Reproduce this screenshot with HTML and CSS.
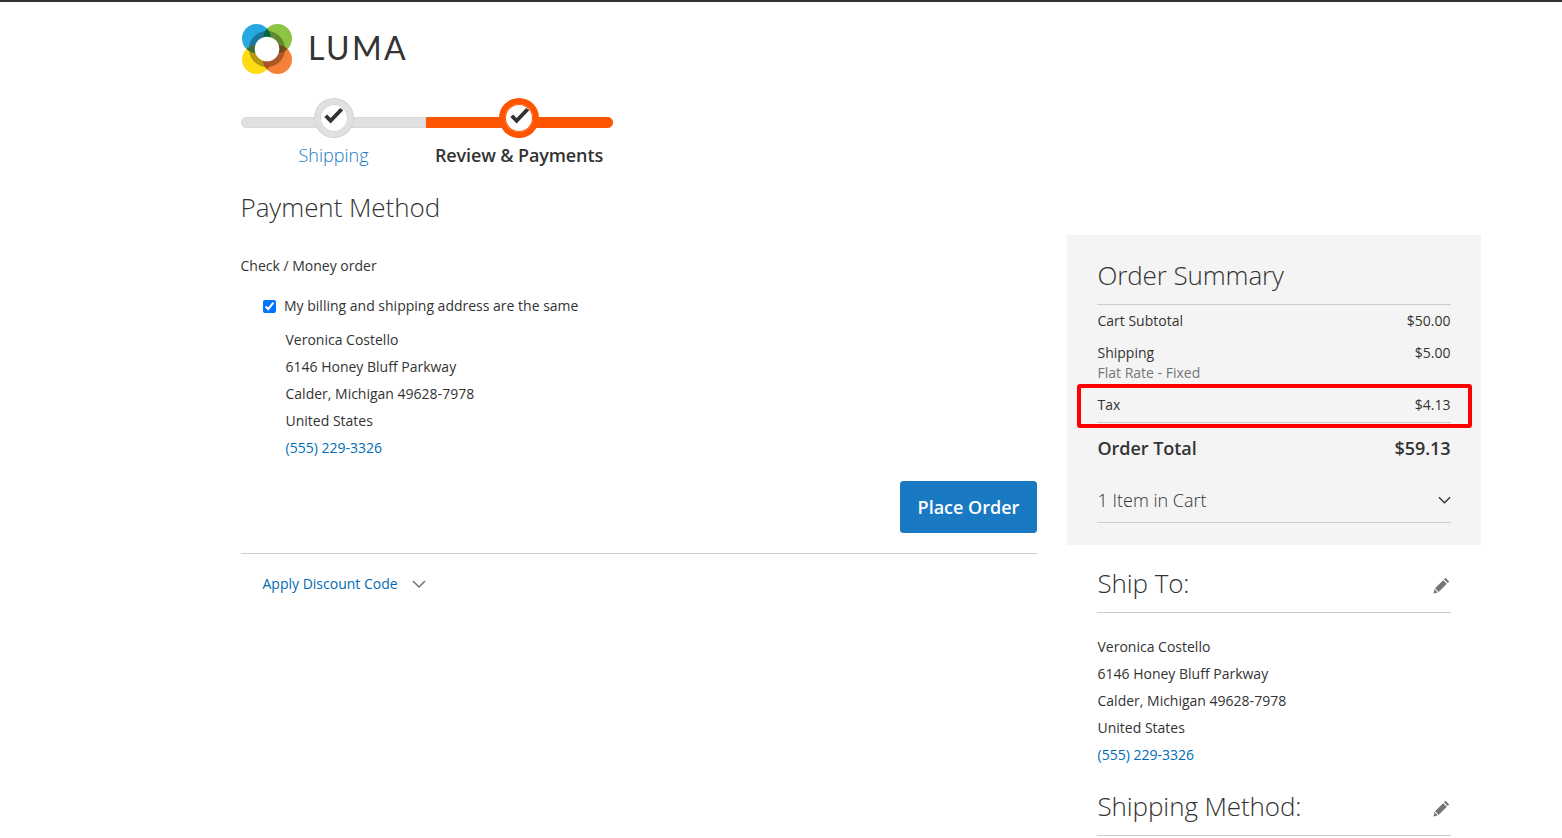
FILE: index.html
```html
<!DOCTYPE html>
<html lang="en">
<head>
<meta charset="utf-8">
<title>Checkout</title>
<link rel="stylesheet" href="styles.css">
</head>
<body>
<div class="page">
  <header class="header">
    <svg class="logo-mark" viewBox="0 0 50 50" width="50" height="50">
      <circle cx="14.500" cy="14.500" r="14.500" fill="#28a8e0"/>
      <circle cx="35.500" cy="14.500" r="14.500" fill="#8cc444"/>
      <circle cx="14.500" cy="35.500" r="14.500" fill="#ffdd15"/>
      <circle cx="35.500" cy="35.500" r="14.500" fill="#f68038"/>
      <circle cx="25" cy="25" r="18" fill="#000" fill-opacity=".3"/>
      <path d="M25 4.500A14.500 14.500 0 0 1 25 24.500A14.500 14.500 0 0 1 25 4.500Z" fill="#006a3e"/>
      <path d="M4.500 25A14.500 14.500 0 0 1 24.500 25A14.500 14.500 0 0 1 4.500 25Z" fill="#3f6b36"/>
      <path d="M25.500 25A14.500 14.500 0 0 1 45.500 25A14.500 14.500 0 0 1 25.500 25Z" fill="#6b4d1c"/>
      <path d="M25 25.500A14.500 14.500 0 0 1 25 45.500A14.500 14.500 0 0 1 25 25.500Z" fill="#a8532a"/>
      <circle cx="25" cy="25" r="12.300" fill="#fff"/>
    </svg>
    <span class="logo-text">LUMA</span>
  </header>

  <ol class="progress">
    <li class="step">
      <span class="badge">
        <svg class="check" viewBox="0 0 20 20" width="23" height="23"><path d="M2 10.500 7.500 16 18.500 4.500 15.800 2.500 7.500 11.200 4.500 8.200Z" fill="#333"/></svg>
      </span>
      <a class="step-label" href="#">Shipping</a>
    </li>
    <li class="step step-active">
      <span class="badge">
        <svg class="check" viewBox="0 0 20 20" width="23" height="23"><path d="M2 10.500 7.500 16 18.500 4.500 15.800 2.500 7.500 11.200 4.500 8.200Z" fill="#333"/></svg>
      </span>
      <span class="step-label">Review &amp; Payments</span>
    </li>
  </ol>

  <div class="columns">
    <main class="main">
      <h1 class="title">Payment Method</h1>
      <p class="method">Check / Money order</p>
      <label class="same">
        <input class="same-box" type="checkbox" checked>
        <span>My billing and shipping address are the same</span>
      </label>
      <address class="addr addr-main">
        <span>Veronica Costello</span>
        <span>6146 Honey Bluff Parkway</span>
        <span>Calder, Michigan 49628-7978</span>
        <span>United States</span>
        <a href="#">(555) 229-3326</a>
      </address>
      <div class="actions">
        <button class="place" type="button">Place Order</button>
      </div>
      <div class="discount">
        <a href="#">Apply Discount Code</a>
        <svg viewBox="0 0 14 8" width="14" height="8"><path d="M1 1 7 7 13 1" fill="none" stroke="#757575" stroke-width="1.500"/></svg>
      </div>
    </main>

    <aside class="side">
      <section class="summary">
        <h2 class="summary-title">Order Summary</h2>
        <div class="totals">
          <div class="row row-sub"><span>Cart Subtotal</span><span>$50.00</span></div>
          <div class="row row-ship">
            <span>Shipping<small>Flat Rate - Fixed</small></span><span>$5.00</span>
          </div>
          <div class="row row-tax"><span>Tax</span><span>$4.13</span></div>
          <div class="row row-total"><span>Order Total</span><span>$59.13</span></div>
        </div>
        <div class="cart-toggle">
          <span>1 Item in Cart</span>
          <svg viewBox="0 0 14 8" width="13" height="8"><path d="M1 1 7 7 13 1" fill="none" stroke="#333" stroke-width="1.400"/></svg>
        </div>
        <div class="highlight"></div>
      </section>

      <section class="info">
        <div class="info-head">
          <h2>Ship To:</h2>
          <svg class="pencil" viewBox="0 0 16 16" width="17" height="17"><path d="M11.800 .8 15.200 4.200 13.800 5.600 10.400 2.200ZM9.600 3 13 6.400 5.300 14.100 1.900 10.700ZM1.300 11.500 4.500 14.700 .5 15.500Z" fill="#757575"/></svg>
        </div>
        <address class="addr addr-side">
          <span>Veronica Costello</span>
          <span>6146 Honey Bluff Parkway</span>
          <span>Calder, Michigan 49628-7978</span>
          <span>United States</span>
          <a href="#">(555) 229-3326</a>
        </address>
        <div class="info-head">
          <h2>Shipping Method:</h2>
          <svg class="pencil" viewBox="0 0 16 16" width="17" height="17"><path d="M11.800 .8 15.200 4.200 13.800 5.600 10.400 2.200ZM9.600 3 13 6.400 5.300 14.100 1.900 10.700ZM1.300 11.500 4.500 14.700 .5 15.500Z" fill="#757575"/></svg>
        </div>
      </section>
    </aside>
  </div>
</div>
</body>
</html>
```
FILE: styles.css
```css
* { box-sizing: border-box; }
html, body { height: 100%; }
body {
  margin: 0;
  height: 838px;
  overflow: hidden;
  background: #fff;
  color: #333;
  font: 14px/20px "Open Sans", "Liberation Sans", sans-serif;
  border-top: 2px solid #333;
}
a { color: #006bb4; text-decoration: none; }
.page { width: 1240.500px; margin-left: 240.500px; }

.header { display: flex; align-items: center; height: 50px; margin-top: 22px; }
.logo-mark { display: block; margin-left: 1.500px; }
.logo-text {
  margin-left: 16px;
  padding-bottom: 2px;
  font: 400 32px/1 "Lato", "Open Sans", sans-serif;
  letter-spacing: 2.400px;
  color: #333;
}

.progress {
  display: flex;
  list-style: none;
  margin: 24px 0 0;
  padding: 0 0 0 .5px;
  width: 372.500px;
}
.step {
  position: relative;
  flex: 0 0 185px;
  display: flex;
  flex-direction: column;
  align-items: center;
}
.step-active { flex: 0 0 187px; padding-right: 1px; }
.step::before {
  content: "";
  position: absolute;
  top: 19px;
  left: 0;
  right: 0;
  height: 8.500px;
  background: #e0e0e0;
  border: 1px solid #d8d8d8;
  border-radius: 5px 0 0 5px;
}
.step-active::before {
  background: #ff5501;
  border-color: #ff5501;
  border-radius: 0 5px 5px 0;
}
.badge {
  position: relative;
  width: 38px;
  height: 38px;
  margin: 1px;
  border-radius: 50%;
  background: #fff;
  border: 5px solid #e0e0e0;
  box-shadow: 0 0 0 1px #d4d4d4, inset 0 0 0 1px #d4d4d4;
  display: flex;
  align-items: center;
  justify-content: center;
}
.check { margin-top: -4px; }
.step-active .badge { border-color: #ff5501; box-shadow: 0 0 0 1px #ff5501, inset 0 0 0 1px #ff5501; }
.step-label { margin-top: 4px; font-size: 18px; line-height: 26px; font-weight: 300; color: #1979c3; }
.step-active .step-label { font-weight: 600; letter-spacing: -.12px; color: #333; }

.columns { display: flex; justify-content: space-between; }
.main { width: 796.500px; }
.side { width: 414px; margin-top: 67px; }

.title {
  margin: 21px 0 0;
  font-size: 26px;
  line-height: 36px;
  font-weight: 300;
  letter-spacing: -.06px;
}
.method { margin: 31px 0 0; }
.same {
  display: flex;
  align-items: center;
  gap: 8px;
  margin: 20px 0 0 22.500px;
}
.same-box { width: 13px; height: 13px; margin: 0; accent-color: #0075ff; }
.addr { display: flex; flex-direction: column; font-style: normal; line-height: 27px; }
.addr-main { margin: 10px 0 0 45px; }
.actions { display: flex; justify-content: flex-end; margin-top: 20px; }
.place {
  width: 137px;
  height: 52px;
  border: 1px solid #1979c3;
  border-radius: 3px;
  background: #1979c3;
  color: #fff;
  font: 600 18px/22px "Open Sans", "Liberation Sans", sans-serif;
  padding: 0;
}
.discount {
  display: flex;
  align-items: center;
  gap: 14px;
  margin-top: 20px;
  padding: 20px 0 0 22px;
  border-top: 1px solid #ccc;
}

.summary {
  position: relative;
  height: 310px;
  padding: 22px 30px 0;
  background: #f4f4f4;
}
.summary-title {
  margin: 0;
  padding: 0 0 11px .5px;
  font-size: 26px;
  line-height: 36px;
  font-weight: 300;
  letter-spacing: -.12px;
  border-bottom: 1px solid #ccc;
}
.totals { display: flex; flex-direction: column; }
.row { display: flex; justify-content: space-between; padding-left: .5px; padding-right: .5px; }
.row-sub { padding-top: 6px; }
.row-ship { padding-top: 12px; }
.row-ship small { display: block; font-size: 14px; color: #757575; line-height: 20px; }
.row-tax { padding-top: 12px; padding-bottom: 7px; border-bottom: 1px solid #ccc; }
.row-total {
  padding-top: 13px;
  font-size: 18px;
  line-height: 24px;
  font-weight: 600;
  letter-spacing: -.05px;
}
.cart-toggle {
  display: flex;
  justify-content: space-between;
  align-items: center;
  margin-top: 26px;
  height: 37px;
  padding: 0 0 8px .5px;
  font-size: 18px;
  font-weight: 300;
  border-bottom: 1px solid #ccc;
}
.highlight {
  position: absolute;
  left: 10px;
  top: 149px;
  width: 395px;
  height: 44px;
  border: 4px solid #f00;
  border-radius: 3px;
}

.info { padding: 0 30px; }
.info-head {
  display: flex;
  justify-content: space-between;
  align-items: center;
  height: 68px;
  padding: 8px 0 0 .5px;
  border-bottom: 1px solid #ccc;
}
.info-head h2 { margin: 0; font-size: 26px; line-height: 36px; font-weight: 300; letter-spacing: -.1px; }
.pencil { margin: 6px 1px 0 0; }
.addr-side { margin-top: 20px; padding-left: .5px; }
```
